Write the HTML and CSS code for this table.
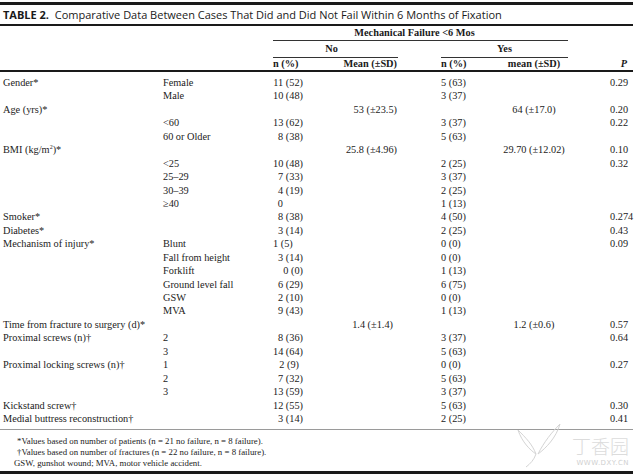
FILE: index.html
```html
<!DOCTYPE html>
<html>
<head>
<meta charset="utf-8">
<link rel="stylesheet" href="styles.css">
</head>
<body>
<div class="page">
  <div class="title"><span class="tlabel">TABLE 2.</span>&nbsp; Comparative Data Between Cases That Did and Did Not Fail Within 6 Months of Fixation</div>
  <table class="data">
    <colgroup>
      <col class="w1"><col class="w2"><col class="w3"><col class="w4"><col class="w5"><col class="w6"><col class="w7"><col class="w8">
    </colgroup>
    <thead>
      <tr class="h1">
        <th></th><th></th>
        <th colspan="5" class="mech">Mechanical Failure &lt;6 Mos</th>
        <th></th>
      </tr>
      <tr class="h2">
        <th></th><th></th>
        <th colspan="2" class="grp no">No</th>
        <th></th>
        <th colspan="2" class="grp yes">Yes</th>
        <th></th>
      </tr>
      <tr class="h3">
        <th></th><th></th>
        <th class="l">n (%)</th>
        <th class="r">Mean (±SD)</th>
        <th></th>
        <th class="l">n (%)</th>
        <th class="c">mean (±SD)</th>
        <th class="pcol"><i>P</i></th>
      </tr>
    </thead>
    <tbody>
      <tr><td class="lab">Gender*</td><td class="sub">Female</td><td class="n">11 (52)</td><td class="m"></td><td></td><td class="n2">5 (63)</td><td class="m2"></td><td class="p">0.29</td></tr>
      <tr><td class="lab"></td><td class="sub">Male</td><td class="n">10 (48)</td><td class="m"></td><td></td><td class="n2">3 (37)</td><td class="m2"></td><td class="p"></td></tr>
      <tr><td class="lab">Age (yrs)*</td><td class="sub"></td><td class="n"></td><td class="m">53 (±23.5)</td><td></td><td class="n2"></td><td class="m2">64 (±17.0)</td><td class="p">0.20</td></tr>
      <tr><td class="lab"></td><td class="sub">&lt;60</td><td class="n">13 (62)</td><td class="m"></td><td></td><td class="n2">3 (37)</td><td class="m2"></td><td class="p">0.22</td></tr>
      <tr><td class="lab"></td><td class="sub">60 or Older</td><td class="n">8 (38)</td><td class="m"></td><td></td><td class="n2">5 (63)</td><td class="m2"></td><td class="p"></td></tr>
      <tr><td class="lab">BMI (kg/m<sup>2</sup>)*</td><td class="sub"></td><td class="n"></td><td class="m">25.8 (±4.96)</td><td></td><td class="n2"></td><td class="m2">29.70 (±12.02)</td><td class="p">0.10</td></tr>
      <tr><td class="lab"></td><td class="sub">&lt;25</td><td class="n">10 (48)</td><td class="m"></td><td></td><td class="n2">2 (25)</td><td class="m2"></td><td class="p">0.32</td></tr>
      <tr><td class="lab"></td><td class="sub">25–29</td><td class="n">7 (33)</td><td class="m"></td><td></td><td class="n2">3 (37)</td><td class="m2"></td><td class="p"></td></tr>
      <tr><td class="lab"></td><td class="sub">30–39</td><td class="n">4 (19)</td><td class="m"></td><td></td><td class="n2">2 (25)</td><td class="m2"></td><td class="p"></td></tr>
      <tr><td class="lab"></td><td class="sub">≥40</td><td class="n zero">0</td><td class="m"></td><td></td><td class="n2">1 (13)</td><td class="m2"></td><td class="p"></td></tr>
      <tr><td class="lab">Smoker*</td><td class="sub"></td><td class="n">8 (38)</td><td class="m"></td><td></td><td class="n2">4 (50)</td><td class="m2"></td><td class="p">0.274</td></tr>
      <tr><td class="lab">Diabetes*</td><td class="sub"></td><td class="n">3 (14)</td><td class="m"></td><td></td><td class="n2">2 (25)</td><td class="m2"></td><td class="p">0.43</td></tr>
      <tr><td class="lab">Mechanism of injury*</td><td class="sub">Blunt</td><td class="n one">1 (5)</td><td class="m"></td><td></td><td class="n2">0 (0)</td><td class="m2"></td><td class="p">0.09</td></tr>
      <tr><td class="lab"></td><td class="sub">Fall from height</td><td class="n">3 (14)</td><td class="m"></td><td></td><td class="n2">0 (0)</td><td class="m2"></td><td class="p"></td></tr>
      <tr><td class="lab"></td><td class="sub">Forklift</td><td class="n">0 (0)</td><td class="m"></td><td></td><td class="n2">1 (13)</td><td class="m2"></td><td class="p"></td></tr>
      <tr><td class="lab"></td><td class="sub">Ground level fall</td><td class="n">6 (29)</td><td class="m"></td><td></td><td class="n2">6 (75)</td><td class="m2"></td><td class="p"></td></tr>
      <tr><td class="lab"></td><td class="sub">GSW</td><td class="n">2 (10)</td><td class="m"></td><td></td><td class="n2">0 (0)</td><td class="m2"></td><td class="p"></td></tr>
      <tr><td class="lab"></td><td class="sub">MVA</td><td class="n">9 (43)</td><td class="m"></td><td></td><td class="n2">1 (13)</td><td class="m2"></td><td class="p"></td></tr>
      <tr><td class="lab">Time from fracture to surgery (d)*</td><td class="sub"></td><td class="n"></td><td class="m short">1.4 (±1.4)</td><td></td><td class="n2"></td><td class="m2">1.2 (±0.6)</td><td class="p">0.57</td></tr>
      <tr><td class="lab">Proximal screws (n)†</td><td class="sub">2</td><td class="n">8 (36)</td><td class="m"></td><td></td><td class="n2">3 (37)</td><td class="m2"></td><td class="p">0.64</td></tr>
      <tr><td class="lab"></td><td class="sub">3</td><td class="n">14 (64)</td><td class="m"></td><td></td><td class="n2">5 (63)</td><td class="m2"></td><td class="p"></td></tr>
      <tr><td class="lab">Proximal locking screws (n)†</td><td class="sub">1</td><td class="n two">2 (9)</td><td class="m"></td><td></td><td class="n2">0 (0)</td><td class="m2"></td><td class="p">0.27</td></tr>
      <tr><td class="lab"></td><td class="sub">2</td><td class="n">7 (32)</td><td class="m"></td><td></td><td class="n2">5 (63)</td><td class="m2"></td><td class="p"></td></tr>
      <tr><td class="lab"></td><td class="sub">3</td><td class="n">13 (59)</td><td class="m"></td><td></td><td class="n2">3 (37)</td><td class="m2"></td><td class="p"></td></tr>
      <tr><td class="lab">Kickstand screw†</td><td class="sub"></td><td class="n">12 (55)</td><td class="m"></td><td></td><td class="n2">5 (63)</td><td class="m2"></td><td class="p">0.30</td></tr>
      <tr class="last"><td class="lab">Medial buttress reconstruction†</td><td class="sub"></td><td class="n">3 (14)</td><td class="m"></td><td></td><td class="n2">2 (25)</td><td class="m2"></td><td class="p">0.41</td></tr>
    </tbody>
  </table>
  <div class="notes">
    <p class="note">*Values based on number of patients (n = 21 no failure, n = 8 failure).</p>
    <p class="note">†Values based on number of fractures (n = 22 no failure, n = 8 failure).</p>
    <p class="note gsw">GSW, gunshot wound; MVA, motor vehicle accident.</p>
  </div>
  <div class="watermark">
    <svg class="wm-logo" width="56" height="48" viewBox="0 0 56 48">
      <path d="M8 10 C16 18 22 24 26 34 C20 30 12 22 8 10 Z" fill="none" stroke="#d4d4d4" stroke-width="1"/>
      <path d="M50 4 C42 12 34 22 28 34 C36 28 46 18 50 4 Z" fill="none" stroke="#d4d4d4" stroke-width="1"/>
      <path d="M26 34 C24 40 20 44 16 47" fill="none" stroke="#d4d4d4" stroke-width="1"/>
    </svg>
    <div class="wm-text">
      <span class="wm-cn">丁香园</span>
      <span class="wm-url">WWW.DXY.CN</span>
    </div>
  </div>
</div>
</body>
</html>
```
FILE: styles.css
```css
html, body {
  margin: 0;
  padding: 0;
  background: #ffffff;
}
body {
  font-family: "Liberation Serif", "Times New Roman", serif;
  color: #222;
}
.page {
  position: relative;
  width: 633px;
  margin-top: 2px;
  border-top: 3px solid #1a1a1a;
  border-bottom: 3px solid #1a1a1a;
  height: 466px;
  box-sizing: content-box;
}
.title {
  font-family: "Open Sans", "DejaVu Sans", sans-serif;
  font-size: 11px;
  height: 19px;
  line-height: 19px;
  padding-left: 3px;
  border-bottom: 2px solid #1a1a1a;
  white-space: nowrap;
  color: #1a1a1a;
}
.tlabel {
  font-weight: 700;
}
.data {
  border-collapse: collapse;
  table-layout: fixed;
  width: 633px;
  font-size: 10.3px;
}
.w1 { width: 160px; }
.w2 { width: 113px; }
.w3 { width: 32px; }
.w4 { width: 93px; }
.w5 { width: 43px; }
.w6 { width: 59px; }
.w7 { width: 68px; }
.w8 { width: 65px; }
th, td {
  padding: 0;
  white-space: nowrap;
}
thead th {
  font-weight: 700;
  color: #1a1a1a;
}
.h1 th {
  height: 14px;
  line-height: 14px;
}
.h1 .mech {
  border-bottom: 1px solid #333;
  text-align: center;
  padding-right: 12px;
}
.h2 th {
  height: 16px;
  line-height: 16px;
}
.h2 .grp {
  border-bottom: 1px solid #333;
  text-align: center;
}
.h2 .no {
  padding-right: 8px;
}
.h3 th {
  height: 12px;
  line-height: 12px;
  border-bottom: 2px solid #1a1a1a;
}
th.l { text-align: left; }
th.r { text-align: right; padding-right: 1px; }
th.c { text-align: center; }
th.pcol { text-align: right; padding-right: 6px; }
tbody tr:first-child td {
  padding-top: 4px;
}
tbody td {
  height: 13.44px;
  line-height: 13.44px;
}
tbody tr.last td {
  padding-bottom: 4px;
  border-bottom: 1px solid #9a9a9a;
}
.lab {
  padding-left: 3px;
}
.sub {
  padding-left: 3px;
}
.n {
  text-align: right;
  padding-right: 2px;
}
.n.zero { padding-right: 22px; }
.n.one { padding-right: 14px; }
.n.two { padding-right: 6px; }
.m {
  text-align: right;
  padding-right: 1px;
}
.m.short { padding-right: 5px; }
.n2 {
  text-align: left;
}
.m2 {
  text-align: center;
}
.p {
  text-align: left;
  padding-left: 42px;
}
sup {
  font-size: 6px;
  line-height: 0;
  vertical-align: 4px;
}
.notes {
  padding-top: 6px;
  padding-left: 14px;
}
.note {
  margin: 0;
  font-size: 8.8px;
  line-height: 11px;
  padding-left: 3px;
}
.note.gsw {
  padding-left: 0;
}
.watermark {
  position: absolute;
  right: 4px;
  bottom: 3px;
  display: flex;
  align-items: flex-end;
  gap: 6px;
}
.wm-logo {
  display: block;
}
.wm-text {
  display: flex;
  flex-direction: column;
  align-items: flex-end;
  gap: 3px;
  margin-bottom: 1px;
}
.wm-cn {
  font-family: "Noto Sans CJK SC", sans-serif;
  font-size: 19px;
  line-height: 20px;
  color: #dcdcdc;
  font-weight: 300;
}
.wm-url {
  font-family: "DejaVu Sans", sans-serif;
  font-size: 7px;
  line-height: 8px;
  color: #d0d0d0;
  letter-spacing: 0.5px;
}
```
